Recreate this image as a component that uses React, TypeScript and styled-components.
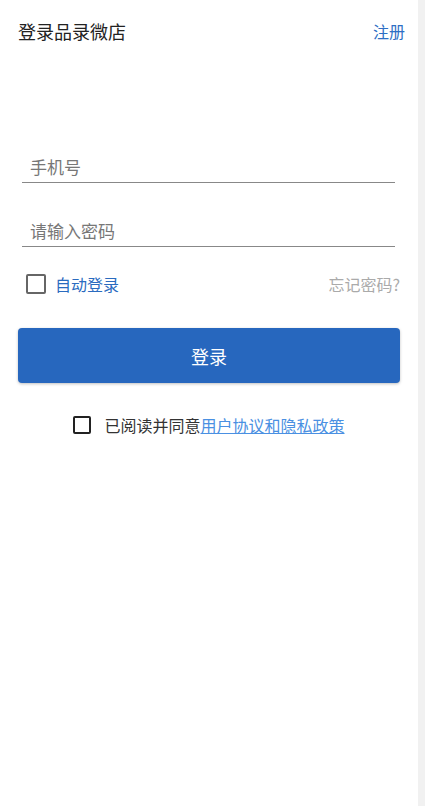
import React from "react";
import styled, { createGlobalStyle } from "styled-components";

const Global = createGlobalStyle`
  html, body { margin: 0; padding: 0; background: #fff; }
  body { font-family: "Noto Sans CJK SC", "Noto Sans", sans-serif; }
  * { box-sizing: border-box; }
`;

const Page = styled.div`
  display: flex;
  width: 425px;
  height: 806px;
  overflow: hidden;
`;

const Main = styled.div`
  flex: 1;
  display: flex;
  flex-direction: column;
`;

const Gutter = styled.div`
  width: 7px;
  background: #f1f1f1;
`;

const Header = styled.div`
  height: 62px;
  display: flex;
  align-items: center;
  justify-content: space-between;
  padding: 0 13px 0 18px;
`;

const Title = styled.div`
  font-size: 18px;
  color: #222;
  font-weight: 400;
`;

const HeaderLink = styled.a`
  font-size: 16px;
  color: #2e6ec4;
  text-decoration: none;
`;

const Form = styled.div`
  display: flex;
  flex-direction: column;
  padding: 0 23px 0 22px;
`;

const Field = styled.input<{ $top: number }>`
  margin-top: ${(p) => p.$top}px;
  height: 30px;
  width: 100%;
  border: none;
  border-bottom: 1.5px solid #888;
  padding: 0 0 2px 8px;
  font-size: 17px;
  font-family: inherit;
  color: #333;
  outline: none;
  background: transparent;
  &::placeholder { color: #777; }
`;

const OptionRow = styled.div`
  margin-top: 25px;
  display: flex;
  align-items: center;
  justify-content: space-between;
  padding: 0 0 0 4px;
  margin-right: -5px;
`;

const CheckLabel = styled.label`
  display: flex;
  align-items: center;
  gap: 9px;
  font-size: 16px;
  color: #2a6bbf;
`;

const Box = styled.span<{ $size: number; $color: string }>`
  display: inline-block;
  width: ${(p) => p.$size}px;
  height: ${(p) => p.$size}px;
  border: 2px solid ${(p) => p.$color};
  border-radius: 2px;
`;

const Forgot = styled.span`
  font-size: 16px;
  color: #aaa;
`;

const ButtonWrap = styled.div`
  padding: 0 18px;
  margin-top: 32px;
`;

const LoginButton = styled.button`
  width: 100%;
  height: 55px;
  border: none;
  border-radius: 4px;
  background: #2767be;
  color: #fff;
  font-size: 18px;
  font-family: inherit;
  box-shadow: 0 1px 3px rgba(0, 0, 0, 0.25);
`;

const Agreement = styled.div`
  margin-top: 33px;
  display: flex;
  align-items: center;
  justify-content: center;
  gap: 13px;
  font-size: 16px;
  color: #333;
`;

const AgreeText = styled.span`
  line-height: 18px;
`;

const AgreeLink = styled.a`
  color: #4a90e2;
  text-decoration: underline;
`;

export default function App() {
  return (
    <>
      <Global />
      <Page>
        <Main>
          <Header>
            <Title>登录品录微店</Title>
            <HeaderLink>注册</HeaderLink>
          </Header>
          <Form>
            <Field $top={91} placeholder="手机号" />
            <Field $top={34} type="password" placeholder="请输入密码" />
            <OptionRow>
              <CheckLabel>
                <Box $size={20} $color="#666" />
                自动登录
              </CheckLabel>
              <Forgot>忘记密码?</Forgot>
            </OptionRow>
          </Form>
          <ButtonWrap>
            <LoginButton>登录</LoginButton>
          </ButtonWrap>
          <Agreement>
            <Box $size={18} $color="#222" />
            <AgreeText>
              已阅读并同意<AgreeLink>用户协议和隐私政策</AgreeLink>
            </AgreeText>
          </Agreement>
        </Main>
        <Gutter />
      </Page>
    </>
  );
}
